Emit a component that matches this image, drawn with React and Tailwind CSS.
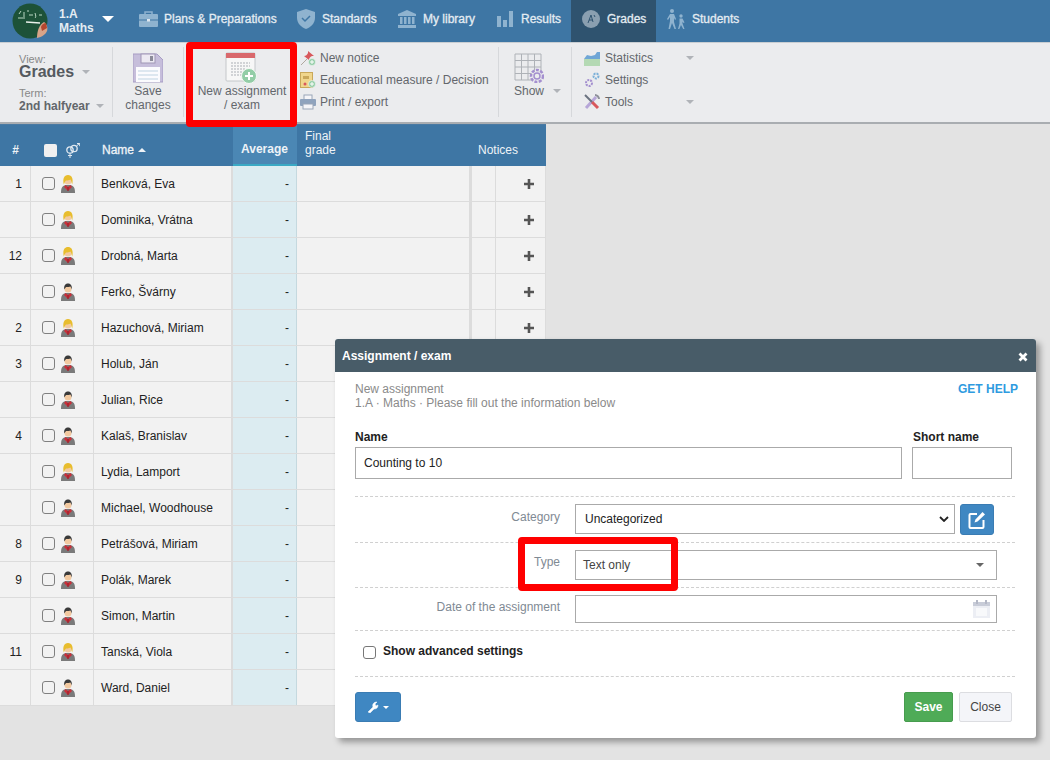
import React from "react";

const FONT = "font-['Liberation_Sans',Arial,sans-serif]";

const rows = [
  ["1", "Benková, Eva", "f"],
  ["", "Dominika, Vrátna", "f"],
  ["12", "Drobná, Marta", "f"],
  ["", "Ferko, Švárny", "m"],
  ["2", "Hazuchová, Miriam", "f"],
  ["3", "Holub, Ján", "m"],
  ["", "Julian, Rice", "m"],
  ["4", "Kalaš, Branislav", "m"],
  ["", "Lydia, Lamport", "f"],
  ["", "Michael, Woodhouse", "m"],
  ["8", "Petrášová, Miriam", "m"],
  ["9", "Polák, Marek", "m"],
  ["", "Simon, Martin", "m"],
  ["11", "Tanská, Viola", "f"],
  ["", "Ward, Daniel", "m"],
];

function Person({ g }) {
  const hair = g === "f" ? "#e8bd2e" : "#3a3a3a";
  return (
    <svg width="14" height="18" viewBox="0 0 14 18">
      <path d="M0 18c0-5 1-7 4.500-8h5C13 11 14 13 14 18z" fill="#7a7a7a" />
      <path d="M4.500 10L7 12l2.500-2 1.500 2-4 4-4-4z" fill="#c9303a" />
      <path d="M7 12v4" stroke="#8f1f28" strokeWidth="1" />
      <circle cx="7" cy="6" r="3.500" fill="#f2c9a0" />
      {g === "f" ? (
        <path d="M2.800 9.500C1.500 4 3 0 7 0s5.500 4 4.200 9.500c-.7-1.500-.7-3.500-1.700-5-2 1.200-3.500 1-4.500 1-1 1-1.500 2.500-2.200 4z" fill={hair} />
      ) : (
        <path d="M3.200 6.500C2.800 3 4 .5 7 .5s4.200 2.500 3.800 6c-.6-1.200-.8-2.300-1.400-3-2 .7-3.700.5-4.300.5-.8.7-1.400 1.500-1.900 2.500z" fill={hair} />
      )}
    </svg>
  );
}

function Caret({ className = "border-t-[#b0b3b8]" }) {
  return <span className={`inline-block w-0 h-0 border-x-4 border-x-transparent border-t-4 ${className}`} />;
}

function NavItem({ icon, label, className = "" }) {
  return (
    <div className={`flex items-center h-full pb-1 text-xs text-[#e4ecf2] [-webkit-text-stroke:0.3px] ${className}`}>
      {icon}
      <span>{label}</span>
    </div>
  );
}

function Avatar() {
  return (
    <svg width="36" height="36" viewBox="0 0 36 36" className="shrink-0">
      <circle cx="18" cy="18" r="17.500" fill="#1d5238" />
      <path d="M7 11l2-3M6 15h5M17 12h4M23 10c1 3 1 4 0 5M27 12h3M12 9v7M15 8h2" stroke="#b9d6c2" strokeWidth="1" fill="none" />
      <path d="M14 19l14 1" stroke="#e9f0ea" strokeWidth="1.500" />
      <path d="M25 35c0-7 2-13 7-16 3 2 4 6 3 9-1 3-5 6-10 7z" fill="#d8a488" />
      <path d="M29 24c1-3 3-4 5-4l1 5-5 3z" fill="#b4462f" />
    </svg>
  );
}

function PlusBadge({ cx = 12, cy = 12, r = 3.500 }) {
  return (
    <>
      <circle cx={cx} cy={cy} r={r} fill="#93cda7" stroke="#f4f8f5" strokeWidth="0.600" />
      <path d={`M${cx} ${cy - 2}v4M${cx - 2} ${cy}h4`} stroke="#fff" strokeWidth="1" />
    </>
  );
}

const navIc = "#8fb3cf";

function App() {
  return (
    <div className={`relative w-[1050px] h-[760px] overflow-hidden bg-[#e3e3e3] text-xs ${FONT}`}>
      {/* top nav */}
      <div className="flex items-center h-[42px] bg-[#3e76a4] pl-3">
        <Avatar />
        <div className="ml-[11px] w-[43px] text-xs leading-[14px] font-bold text-[#e4ecf2]">
          <div>1.A</div>
          <div>Maths</div>
        </div>
        <span className="inline-block w-0 h-0 border-x-[6px] border-x-transparent border-t-[6px] border-t-white mb-1" />
        <NavItem
          className="ml-[25px] w-[158px]"
          label="Plans & Preparations"
          icon={
            <svg width="19" height="16" viewBox="0 0 19 16" className="mr-[6px]">
              <path d="M6 3V1h7v2" stroke={navIc} strokeWidth="1.500" fill="none" />
              <rect x="0" y="3" width="19" height="13" rx="1" fill={navIc} />
              <path d="M0 9h19" stroke="#3e76a4" strokeWidth="1" />
              <rect x="8" y="8" width="3" height="2.500" fill="#dfe8f0" />
            </svg>
          }
        />
        <NavItem
          className="w-[101px]"
          label="Standards"
          icon={
            <svg width="18" height="20" viewBox="0 0 18 20" className="mr-[7px]">
              <path d="M9 0l9 3v6c0 5-4 9-9 11-5-2-9-6-9-11V3z" fill={navIc} />
              <path d="M5 9l3 3 5-5" stroke="#3e76a4" strokeWidth="1.500" fill="none" />
            </svg>
          }
        />
        <NavItem
          className="w-[99px]"
          label="My library"
          icon={
            <svg width="18" height="18" viewBox="0 0 18 18" className="mr-[7px]">
              <path d="M9 0l9 4v2H0V4z" fill={navIc} />
              <path d="M2 7h2.500v7H2zM6 7h2.500v7H6zM10 7h2.500v7H10zM14 7h2.500v7H14z" fill={navIc} />
              <rect x="0" y="15" width="18" height="3" fill={navIc} />
            </svg>
          }
        />
        <NavItem
          className="w-[74px]"
          label="Results"
          icon={
            <svg width="16" height="16" viewBox="0 0 16 16" className="mr-[8px]">
              <path d="M0 5h4v11H0zM6 9h4v7H6zM12 0h4v16h-4z" fill={navIc} />
            </svg>
          }
        />
        <NavItem
          className="w-[85px] pl-[11px] bg-[#2f536f]"
          label="Grades"
          icon={
            <svg width="18" height="18" viewBox="0 0 18 18" className="mr-[7px]">
              <circle cx="9" cy="9" r="9" fill="#8a9fb0" />
              <path d="M6 13l3-8 2 7M7 10h4M12 5l1 2" stroke="#2f536f" strokeWidth="1" fill="none" />
            </svg>
          }
        />
        <NavItem
          className="pl-[10px]"
          label="Students"
          icon={
            <svg width="20" height="20" viewBox="0 0 20 20" className="mr-[6px]">
              <circle cx="6" cy="2" r="2" fill={navIc} />
              <path d="M4 5h4l2 5-1 1-1-2v4l2 7H8.500L6 14l-2 6H2.500L4 12V8l-2 3-1-1z" fill={navIc} />
              <circle cx="15" cy="7" r="1.700" fill={navIc} />
              <path d="M13.500 9.500h3l2 4-1 .5-1-1.500v2l2 5.500h-1.300L15 16l-1.700 4H12l1.500-5.500z" fill={navIc} />
            </svg>
          }
        />
      </div>

      {/* toolbar */}
      <div className="flex h-[82px] pt-1 bg-[#ebecee] border-t border-[#c9ced2] border-b-2 border-b-[#a9adb1] text-[#666b70]">
        <div className="w-[113px] pl-[19px] border-r border-[#d6d8db] h-[70px] text-[#777]">
          <div className="text-[11px] leading-[12px] mt-[6px] text-[#888]">View:</div>
          <div className="flex items-center gap-[8px] text-base leading-[14px] font-bold text-[#555a60]">
            Grades <Caret />
          </div>
          <div className="text-[11px] leading-[12px] mt-[8px] text-[#888]">Term:</div>
          <div className="flex items-center gap-[6px] text-xs leading-[14px] font-bold text-[#62666b]">
            2nd halfyear <Caret />
          </div>
        </div>
        <div className="w-[71px] border-r border-[#d6d8db] h-[70px] flex flex-col items-center">
          <svg width="30" height="30" viewBox="0 0 30 30" className="mt-[6px]">
            <path d="M0 1h24l6 6v22H0z" fill="#c6bedb" stroke="#a79dc4" />
            <rect x="8" y="1" width="14" height="9" fill="#ece9f2" stroke="#9f96b6" />
            <rect x="17" y="3" width="3" height="5" fill="#8b8b99" />
            <rect x="3" y="14" width="24" height="15" fill="#fbfbfe" />
            <path d="M5 18h20M5 22h20M5 26h20" stroke="#bfd3e2" />
          </svg>
          <div className="text-center leading-[14px] mt-[1px] text-[#63676c]">
            Save
            <br />
            changes
          </div>
        </div>
        <div className="w-[116px] flex flex-col items-center">
          <svg width="36" height="32" viewBox="0 0 36 32" className="ml-[1px] mt-[5px]">
            <rect x="1" y="1" width="29" height="28" rx="1" fill="#f7f7f7" stroke="#c4c7ca" />
            <rect x="1" y="1" width="29" height="5" fill="#d9686c" />
            <path d="M6 11h19M6 14h19M6 17h14M6 20h14M6 23h12" stroke="#c5c8cc" strokeWidth="1.500" strokeDasharray="2 1" />
            <circle cx="24" cy="24" r="7.500" fill="#93cda7" stroke="#f4f8f5" />
            <path d="M24 20v8M20 24h8" stroke="#fff" strokeWidth="2" />
          </svg>
          <div className="text-center leading-[14px] text-[#63676c]">
            New assignment
            <br />/ exam
          </div>
        </div>
        <div className="w-[200px] pl-[1px] pt-1 border-r border-[#d6d8db] h-[70px] flex flex-col gap-2 text-[#63676c] -ml-[1px]">
          <div className="flex items-center h-[14px] gap-[4px]">
            <svg width="16" height="16" viewBox="0 0 16 16">
              <path d="M1 15l6-6" stroke="#b0a99f" />
              <path d="M4 6c2 0 3-1 4-3V1l6 5h-2c-2 1-3 2-3 4z" fill="#d8585c" />
              <PlusBadge />
            </svg>
            New notice
          </div>
          <div className="flex items-center h-[14px] gap-[4px]">
            <svg width="16" height="16" viewBox="0 0 16 16">
              <rect x="0.500" y="0.500" width="12" height="15" fill="#f0d68c" stroke="#c9a85a" />
              <rect x="3" y="4" width="6" height="3" fill="#c9a85a" />
              <circle cx="5" cy="12" r="1.500" fill="#d8585c" />
              <PlusBadge />
            </svg>
            Educational measure / Decision
          </div>
          <div className="flex items-center h-[14px] gap-[4px]">
            <svg width="16" height="16" viewBox="0 0 16 16">
              <rect x="4" y="1" width="8" height="5" fill="#f5f5f8" stroke="#9aa6b8" />
              <rect x="0" y="5" width="16" height="7" rx="1" fill="#8fa3bd" />
              <rect x="3" y="10" width="10" height="5" fill="#f5f5f8" stroke="#9aa6b8" />
            </svg>
            Print / export
          </div>
        </div>
        <div className="w-[73px] border-r border-[#d6d8db] h-[70px] pl-[15px] text-[#63676c]">
          <svg width="30" height="30" viewBox="0 0 30 30" className="mt-[6px]">
            <path d="M1 1h26v26H1zM7.500 1v26M14 1v26M20.500 1v26M1 7.500h26M1 14h26M1 20.500h26" stroke="#aeb2b7" fill="none" />
            <circle cx="23" cy="23" r="6" fill="#ebecee" stroke="#a48fcf" strokeWidth="2.500" strokeDasharray="3 1.400" />
            <circle cx="23" cy="23" r="3" fill="#ebecee" stroke="#a48fcf" strokeWidth="1.500" />
          </svg>
          <div className="flex items-center gap-[9px] leading-[14px] mt-[1px]">
            Show <Caret />
          </div>
        </div>
        <div className="pl-[12px] pt-1 flex flex-col gap-2 text-[#63676c]">
          {[
            [
              "Statistics",
              true,
              <svg width="16" height="16" viewBox="0 0 16 16">
                <rect x="0" y="9" width="16" height="7" fill="#b4d9b4" />
                <path d="M0 9l3-4 4 1 4-1 2-3 3 0v7H0z" fill="#6fa6d6" />
              </svg>,
            ],
            [
              "Settings",
              false,
              <svg width="16" height="16" viewBox="0 0 16 16">
                <circle cx="5" cy="11" r="3" fill="none" stroke="#a48fcf" strokeWidth="2" strokeDasharray="2 1" />
                <circle cx="12" cy="4" r="2.500" fill="none" stroke="#7bb0d8" strokeWidth="2" strokeDasharray="2 1" />
              </svg>,
            ],
            [
              "Tools",
              true,
              <svg width="16" height="16" viewBox="0 0 16 16">
                <path d="M2 14L12 3" stroke="#b6a6d8" strokeWidth="3" />
                <path d="M11 1c2 0 4 2 4 4" stroke="#8d8f9a" strokeWidth="2" fill="none" />
                <path d="M8 8l6 6" stroke="#d8585c" strokeWidth="3" />
                <path d="M1 1l7 7" stroke="#6b7380" strokeWidth="2" />
              </svg>,
            ],
          ].map(([t, c, ic]) => (
            <div key={t} className="flex items-center h-[14px] w-[110px]">
              <span className="w-[21px] flex">{ic}</span>
              <span className="flex-1">{t}</span>
              {c && <Caret />}
            </div>
          ))}
        </div>
      </div>

      {/* table */}
      <div className="w-[546px]">
        <div className="flex h-[42px] bg-[#3e76a4] text-[#eef3f7] text-xs border-t border-[#4a7aa3]">
          <div className="w-[31px] flex items-center justify-center pt-[9px] font-bold">#</div>
          <div className="w-[63px] flex items-center pl-[13px] pt-[9px] gap-[8px]">
            <span className="w-[13px] h-[13px] rounded-[2px] bg-[#f0f0f0]" />
            <svg width="15" height="15" viewBox="0 0 15 15">
              <circle cx="5" cy="7" r="3.200" stroke="#dfe8f0" strokeWidth="1.300" fill="none" />
              <circle cx="9" cy="5.500" r="3.200" stroke="#dfe8f0" strokeWidth="1.300" fill="none" />
              <path d="M5 10v5M3 12.500h4M11.500 3l3-2.500M12 .5h2.700v2.700" stroke="#dfe8f0" fill="none" />
            </svg>
          </div>
          <div className="w-[139px] flex items-center pl-[8px] gap-[4px] pt-[9px] [-webkit-text-stroke:0.3px]">
            Name
            <span className="inline-block w-0 h-0 border-x-4 border-x-transparent border-b-4 border-b-[#eef3f7]" />
          </div>
          <div className="w-[64px] flex items-center justify-center pt-[9px] font-bold bg-[#4b87b4] border-b-2 border-[#3aa9c4] pr-[1px]">
            Average
          </div>
          <div className="w-[181px] pl-[8px] pt-[4px] leading-[14px]">
            Final
            <br />
            grade
          </div>
          <div className="w-[68px] flex items-center pt-[9px]">Notices</div>
        </div>
        {rows.map(([n, name, g]) => (
          <div key={name} className="flex h-9 bg-[#f2f2f2] border-b border-[#dcdcdc] text-[#222] text-xs">
            <div className="w-[31px] border-r border-[#dcdcdc] flex items-center justify-end pr-[8px]">{n}</div>
            <div className="w-[63px] border-r border-[#dcdcdc] flex items-center pl-[11px] gap-[6px]">
              <span className="w-[13px] h-[13px] rounded-[3px] border border-[#808080]" />
              <Person g={g} />
            </div>
            <div className="w-[139px] flex items-center pl-[7px] border-r-2 border-[#dcdcdc]">{name}</div>
            <div className="w-[64px] flex items-center justify-end pr-[7px] bg-[#dcecf1] border-r border-[#c5d9df]">-</div>
            <div className="w-[175px] border-r-[3px] border-[#dcdcdc]" />
            <div className="w-[24px] border-r border-[#dcdcdc]" />
            <div className="w-[50px] flex items-center justify-end pr-[11px] border-r border-[#dcdcdc]">
              <svg width="10" height="10" viewBox="0 0 10 10">
                <path d="M5 0v10M0 5h10" stroke="#555" strokeWidth="2.600" />
              </svg>
            </div>
          </div>
        ))}
      </div>

      {/* red highlights */}
      <div className="absolute left-[186px] top-[42px] w-[111px] h-[85px] border-[7px] border-[#ff0000] rounded-[4px]" />

      {/* modal */}
      <div className="absolute left-[335px] top-[339px] w-[701px] h-[399px] bg-white rounded-[3px] shadow-[4px_4px_6px_rgba(0,0,0,0.35)]">
        <div className="flex items-center justify-between h-[33px] pl-[7px] pr-[8px] bg-[#485c68] rounded-t-[3px] text-white font-bold text-xs">
          Assignment / exam
          <svg width="10" height="10" viewBox="0 0 10 10" className="mt-[2px]">
            <path d="M1.500 1.500l7 7M8.500 1.500l-7 7" stroke="#fff" strokeWidth="2.800" />
          </svg>
        </div>
        <div className="px-5">
          <div className="flex justify-between pt-[10px] text-[#8a8a8a] leading-[14px]">
            <div>
              New assignment
              <br />
              1.A · Maths · Please fill out the information below
            </div>
            <div className="font-bold text-[#2f9be0] -mr-[2px]">GET HELP</div>
          </div>
          <div className="flex gap-[10px] mt-5">
            <div className="w-[547px]">
              <div className="font-bold text-[#222] leading-[14px] mb-[3px]">Name</div>
              <div className="h-[32px] border border-[#aaa] flex items-center pl-2 text-[#222]">Counting to 10</div>
            </div>
            <div className="w-[100px]">
              <div className="font-bold text-[#222] leading-[14px] mb-[3px] pl-[1px]">Short name</div>
              <div className="h-[32px] border border-[#aaa]" />
            </div>
          </div>
          <div className="w-[660px] mt-[17px] border-t border-dashed border-[#d0d0d0]" />
          <div className="flex items-start h-[45px] pt-[7px]">
            <div className="w-[205px] text-right text-[#7f8a94] pt-[5px]">Category</div>
            <div className="ml-[15px] w-[380px] h-[30px] border border-[#aaa] flex items-center justify-between pl-[9px] pr-[5px] text-[#222]">
              Uncategorized
              <svg width="10" height="6" viewBox="0 0 10 6">
                <path d="M1 1l4 4 4-4" stroke="#222" strokeWidth="1.800" fill="none" />
              </svg>
            </div>
            <div className="ml-[5px] w-[34px] h-[31px] rounded-[3px] bg-[#3f87c2] border border-[#3a7cb3] flex items-center justify-center">
              <svg width="18" height="18" viewBox="0 0 18 18">
                <path d="M9 3H2.500a1 1 0 0 0-1 1v12a1 1 0 0 0 1 1h12a1 1 0 0 0 1-1V9" stroke="#fff" strokeWidth="2" fill="none" />
                <path d="M6.500 11.500l1-3 7-7.500 2.500 2.500-7.500 7z" fill="#fff" />
              </svg>
            </div>
          </div>
          <div className="w-[660px] border-t border-dashed border-[#d0d0d0]" />
          <div className="flex items-start h-[44px] pt-[7px]">
            <div className="w-[205px] text-right text-[#7f8a94] pt-[4px]">Type</div>
            <div className="ml-[15px] w-[422px] h-[30px] border border-[#aaa] flex items-center justify-between pl-[7px] pr-[12px] text-[#444]">
              Text only
              <Caret className="border-t-[#666]" />
            </div>
          </div>
          <div className="w-[660px] border-t border-dashed border-[#d0d0d0]" />
          <div className="flex items-start h-[42px] pt-[7px]">
            <div className="w-[205px] text-right text-[#7f8a94] pt-[4px]">Date of the assignment</div>
            <div className="ml-[15px] w-[422px] h-[28px] border border-[#aaa] flex items-center justify-end pr-[6px]">
              <svg width="17" height="18" viewBox="0 0 17 18">
                <rect x="0" y="2" width="17" height="16" fill="#eceef4" />
                <rect x="0" y="2" width="17" height="4" fill="#c8ccd8" />
                <path d="M4 0v4M13 0v4" stroke="#b4b8c6" strokeWidth="2" />
                <rect x="3" y="8" width="11" height="8" fill="#f8f9fb" />
              </svg>
            </div>
          </div>
          <div className="w-[660px] border-t border-dashed border-[#d0d0d0]" />
          <div className="flex items-center h-[45px] pl-[8px] gap-[7px] font-bold text-[#222] pb-[5px]">
            <span className="w-[13px] h-[13px] mt-[3px] rounded-[3px] border border-[#777]" />
            Show advanced settings
          </div>
          <div className="w-[660px] border-t border-dashed border-[#d0d0d0]" />
          <div className="flex items-center mt-[15px] w-[657px]">
            <div className="w-[46px] h-[30px] rounded-[3px] bg-[#3f87c2] border border-[#3a7cb3] flex items-center justify-center gap-[4px]">
              <svg width="12" height="12" viewBox="0 0 12 12">
                <path d="M1 11l5-5c-1-3 1-5 4-5L8 3l1 2 2-1c0 3-2 4-4 4l-4 4z" fill="#fff" stroke="#fff" strokeWidth="0.500" />
              </svg>
              <span className="inline-block w-0 h-0 border-x-[3px] border-x-transparent border-t-[3px] border-t-white" />
            </div>
            <div className="ml-auto w-[49px] h-[30px] rounded-[2px] bg-[#4fab57] border border-[#479c4e] text-white font-bold flex items-center justify-center">
              Save
            </div>
            <div className="ml-[6px] w-[53px] h-[30px] rounded-[2px] bg-[#f4f5f9] border border-[#dcdde1] text-[#444] flex items-center justify-center">
              Close
            </div>
          </div>
        </div>
      </div>

      <div className="absolute left-[518px] top-[537px] w-[160px] h-[54px] border-[7px] border-[#ff0000] rounded-[4px]" />
    </div>
  );
}

export default App;
